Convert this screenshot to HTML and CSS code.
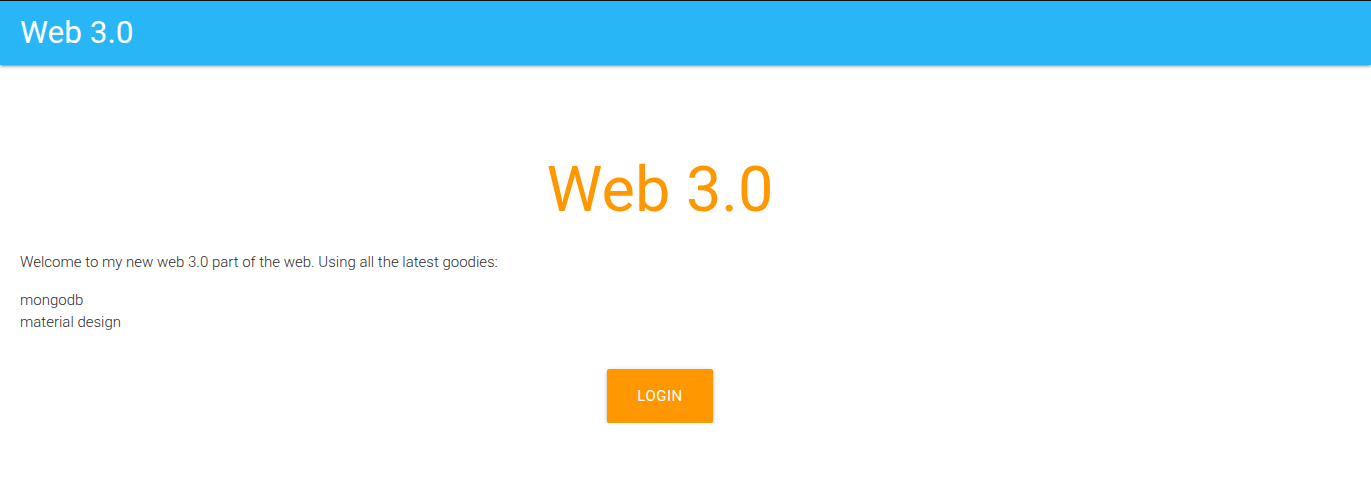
FILE: index.html
```html
<!DOCTYPE html>
<html>
<head>
<meta charset="utf-8">
<link rel="stylesheet" href="styles.css">
<title>Web 3.0</title>
</head>
<body>
<nav class="nav">
  <div class="nav-wrapper">
    <a class="brand-logo" href="#">Web 3.0</a>
  </div>
</nav>
<main class="content">
  <h1 class="title">Web 3.0</h1>
  <p class="intro">Welcome to my new web 3.0 part of the web. Using all the latest goodies:</p>
  <p class="list">mongodb<br>material design</p>
  <div class="actions">
    <a class="btn-large" href="#">LOGIN</a>
  </div>
</main>
</body>
</html>
```
FILE: styles.css
```css
html {
  font-size: 15px;
}
body {
  margin: 0;
  font-family: Roboto, "Liberation Sans", sans-serif;
  font-weight: 300;
  color: rgba(0, 0, 0, 0.87);
  line-height: 1.5;
  background: #fff;
}
.nav {
  border-top: 1px solid #111;
  background: #29b6f6;
  height: 64px;
  line-height: 64px;
  box-shadow: 0 2px 2px 0 rgba(0,0,0,.14), 0 3px 1px -2px rgba(0,0,0,.12), 0 1px 5px 0 rgba(0,0,0,.2);
}
.nav-wrapper {
  padding: 0 20px;
}
.brand-logo {
  color: #fff;
  text-decoration: none;
  font-size: 2.1rem;
  font-weight: 400;
}
.content {
  width: 1280px;
  padding: 0 0 0 20px;
}
.title {
  margin: 90px 0 27px;
  text-align: center;
  color: #ff9800;
  font-size: 4.2rem;
  font-weight: 400;
  line-height: 110%;
}
.intro, .list {
  margin: 15px 0;
}
.actions {
  display: flex;
  justify-content: center;
  margin-top: 35px;
}
.btn-large {
  display: inline-block;
  height: 54px;
  line-height: 54px;
  padding: 0 30px;
  background: #ff9800;
  color: #fff;
  text-decoration: none;
  font-weight: 400;
  font-size: 15px;
  letter-spacing: .5px;
  border-radius: 2px;
  box-shadow: 0 2px 2px 0 rgba(0,0,0,.14), 0 3px 1px -2px rgba(0,0,0,.12), 0 1px 5px 0 rgba(0,0,0,.2);
}
```
